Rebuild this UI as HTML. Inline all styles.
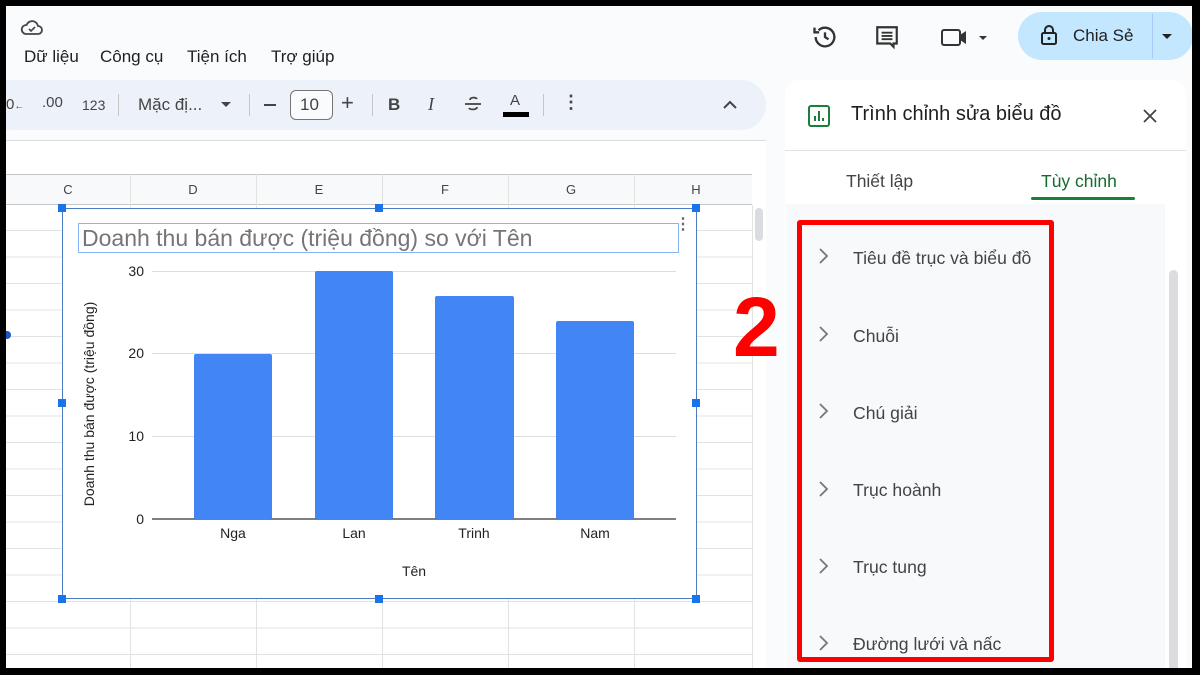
<!DOCTYPE html>
<html><head><meta charset="utf-8"><style>
*{margin:0;padding:0;box-sizing:border-box}
body{width:1200px;height:675px;background:#000;position:relative;overflow:hidden;font-family:"Liberation Sans",Arial,sans-serif;color:#444746}
#f{position:absolute;left:6px;top:6px;width:1186px;height:662px;background:#f9fbfd;overflow:hidden}
.a{position:absolute}
.t{position:absolute;white-space:nowrap}
.m{position:absolute;top:41px;font-size:17px;color:#1f1f1f;white-space:nowrap}
.p{position:absolute;white-space:nowrap;left:847px;font-size:17.6px;color:#444}
</style></head><body>
<div id="f">
<svg class="a" style="left:14px;top:12px" width="24" height="20" viewBox="0 0 24 20"><path d="M6 16h12a4 4 0 0 0 0-8 6 6 0 0 0-11.5-1A4.5 4.5 0 0 0 6 16z" fill="none" stroke="#444" stroke-width="1.8"/><path d="M9 11l2 2 4-4" fill="none" stroke="#444" stroke-width="1.6"/></svg>
<div class="m" style="left:18px">Dữ liệu</div>
<div class="m" style="left:94px">Công cụ</div>
<div class="m" style="left:181px">Tiện ích</div>
<div class="m" style="left:265px">Trợ giúp</div>
<div class="a" style="left:-20px;top:74px;width:780px;height:50px;background:#edf2fa;border-radius:25px"></div>
<div class="t" style="left:0;top:90px;font-size:15px;color:#444">0<span style="font-size:10px">←</span></div>
<div class="t" style="left:36px;top:88px;font-size:15px;color:#444">.00</div>
<div class="t" style="left:76px;top:91px;font-size:14px;color:#444">123</div>
<div class="a" style="left:112px;top:88px;width:1px;height:22px;background:#c4c7c5"></div>
<div class="t" style="left:132px;top:89px;font-size:17px;color:#444">Mặc đị...</div>
<div class="a" style="left:215px;top:96px;border:5px solid transparent;border-top:5px solid #444"></div>
<div class="a" style="left:243px;top:88px;width:1px;height:22px;background:#c4c7c5"></div>
<div class="a" style="left:258px;top:98px;width:12px;height:2px;background:#444"></div>
<div class="a" style="left:284px;top:84px;width:43px;height:30px;border:1px solid #747775;border-radius:6px;background:#f9fbfd"></div>
<div class="t" style="left:294px;top:89px;font-size:17px;color:#444">10</div>
<div class="t" style="left:335px;top:84px;font-size:22px;color:#444">+</div>
<div class="a" style="left:366px;top:88px;width:1px;height:22px;background:#c4c7c5"></div>
<div class="t" style="left:382px;top:89px;font-size:17px;font-weight:bold;color:#444">B</div>
<div class="t" style="left:422px;top:88px;font-size:18px;font-style:italic;font-family:'Liberation Serif',serif;color:#444">I</div>
<svg class="a" style="left:458px;top:88px" width="18" height="20"><path d="M13 5c-1-2-7-2-7 1M5 14c1 2 8 2 8-1" fill="none" stroke="#444" stroke-width="1.8"/><path d="M1 10h16" stroke="#444" stroke-width="1.8"/></svg>
<div class="t" style="left:504px;top:86px;font-size:15px;color:#444">A</div>
<div class="a" style="left:497px;top:106px;width:26px;height:5px;background:#000"></div>
<div class="a" style="left:537px;top:88px;width:1px;height:22px;background:#c4c7c5"></div>
<div class="t" style="left:556px;top:86px;font-size:18px;font-weight:bold;color:#444">⋮</div>
<svg class="a" style="left:716px;top:93px" width="16" height="12"><path d="M2 9l6-6 6 6" fill="none" stroke="#444" stroke-width="2"/></svg>
<div class="a" style="left:0;top:134px;width:760px;height:528px;background:#fff;border-top:1px solid #dadce0"></div>
<div class="a" style="left:0;top:168px;width:746px;height:31px;background:#f8f9fa;border-top:1px solid #c4c7c5;border-bottom:1px solid #c4c7c5"></div>
<svg class="a" style="left:0;top:168px" width="746" height="494">
<g stroke="#e1e3e1" stroke-width="1">
<line x1="124.5" y1="0" x2="124.5" y2="494"/><line x1="250.5" y1="0" x2="250.5" y2="494"/><line x1="376.5" y1="0" x2="376.5" y2="494"/><line x1="502.5" y1="0" x2="502.5" y2="494"/><line x1="628.5" y1="0" x2="628.5" y2="494"/>
</g>
<g stroke="#e1e3e1"><path d="M0 56.5H746M0 83H746M0 109.5H746M0 136H746M0 162.5H746M0 189H746M0 215.5H746M0 242H746M0 268.5H746M0 295H746M0 321.5H746M0 348H746M0 374.5H746M0 401H746M0 427.5H746M0 454H746M0 480.5H746"/></g>
<g font-size="13" fill="#444" text-anchor="middle" font-family="Liberation Sans"><text x="62" y="20">C</text><text x="187" y="20">D</text><text x="313" y="20">E</text><text x="439" y="20">F</text><text x="565" y="20">G</text><text x="690" y="20">H</text></g>
</svg>
<div class="a" style="left:746px;top:199px;width:14px;height:463px;background:#fff;border-left:1px solid #e1e3e1"></div>
<div class="a" style="left:749px;top:202px;width:8px;height:33px;background:#dadce0;border-radius:4px"></div>
<div class="a" style="left:-3px;top:325px;width:8px;height:8px;border-radius:50%;background:#1a56c0"></div>
<div class="a" style="left:56px;top:202px;width:635px;height:391px;background:#fff;border:1.5px solid #4a7cc4"></div>
<div class="a" style="left:52px;top:198px;width:8px;height:8px;background:#1a73e8"></div>
<div class="a" style="left:369px;top:198px;width:8px;height:8px;background:#1a73e8"></div>
<div class="a" style="left:686px;top:198px;width:8px;height:8px;background:#1a73e8"></div>
<div class="a" style="left:52px;top:393px;width:8px;height:8px;background:#1a73e8"></div>
<div class="a" style="left:686px;top:393px;width:8px;height:8px;background:#1a73e8"></div>
<div class="a" style="left:52px;top:589px;width:8px;height:8px;background:#1a73e8"></div>
<div class="a" style="left:369px;top:589px;width:8px;height:8px;background:#1a73e8"></div>
<div class="a" style="left:686px;top:589px;width:8px;height:8px;background:#1a73e8"></div>
<div class="a" style="left:72px;top:217px;width:601px;height:30px;border:1px solid #8ab4f8"></div>
<div class="t" style="left:76px;top:219px;font-size:23px;color:#757575">Doanh thu bán được (triệu đồng) so với Tên</div>
<div class="t" style="left:669px;top:208px;font-size:16px;font-weight:bold;color:#666">⋮</div>
<svg class="a" style="left:0;top:0" width="700" height="600" font-family="Liberation Sans">
<g stroke="#ddd"><line x1="146" y1="265.5" x2="670" y2="265.5"/><line x1="146" y1="347.5" x2="670" y2="347.5"/><line x1="146" y1="430.5" x2="670" y2="430.5"/></g>
<line x1="146" y1="513" x2="670" y2="513" stroke="#333" stroke-width="1.3"/>
<g font-size="14" fill="#222" text-anchor="end"><text x="138" y="270">30</text><text x="138" y="352">20</text><text x="138" y="435">10</text><text x="138" y="518">0</text></g>
<g fill="#4285f4"><rect x="188" y="348" width="78" height="165" rx="2"/><rect x="309" y="265" width="78" height="248" rx="2"/><rect x="429" y="290" width="79" height="223" rx="2"/><rect x="550" y="315" width="78" height="198" rx="2"/></g>
<g font-size="14" fill="#222" text-anchor="middle"><text x="227" y="532">Nga</text><text x="348" y="532">Lan</text><text x="468" y="532">Trinh</text><text x="589" y="532">Nam</text><text x="408" y="570">Tên</text></g>
<text transform="translate(88 398) rotate(-90)" font-size="14" fill="#222" text-anchor="middle">Doanh thu bán được (triệu đồng)</text>
</svg>
<svg class="a" style="left:805px;top:17px" width="28" height="28" viewBox="0 0 24 24"><path d="M4 12a8 8 0 1 0 2.5-5.8" fill="none" stroke="#333" stroke-width="2"/><path d="M3 4v4h4" fill="none" stroke="#333" stroke-width="2"/><path d="M12 8v4l3 2" fill="none" stroke="#333" stroke-width="2"/></svg>
<svg class="a" style="left:868px;top:18px" width="26" height="26" viewBox="0 0 24 24"><path d="M3 3h18v15h-3v3l-3-3H3z" fill="none" stroke="#333" stroke-width="2"/><path d="M7 8h10M7 11h10M7 14h10" stroke="#333" stroke-width="1.8"/></svg>
<svg class="a" style="left:934px;top:20px" width="50" height="24" viewBox="0 0 50 24"><rect x="2" y="4" width="18" height="15" rx="2" fill="none" stroke="#333" stroke-width="2"/><path d="M20 9l6-4v13l-6-4z" fill="#333"/><path d="M39 10h8l-4 4z" fill="#333"/></svg>
<div class="a" style="left:1012px;top:6px;width:175px;height:48px;background:#c2e7ff;border-radius:24px"></div>
<div class="a" style="left:1146px;top:8px;width:1px;height:44px;background:#a8c7fa"></div>
<svg class="a" style="left:1034px;top:18px" width="18" height="22" viewBox="0 0 18 22"><rect x="2" y="9" width="14" height="11" rx="1.5" fill="none" stroke="#222" stroke-width="2"/><path d="M5 9V6a4 4 0 0 1 8 0v3" fill="none" stroke="#222" stroke-width="2"/><circle cx="9" cy="14.5" r="1.5" fill="#222"/></svg>
<div class="t" style="left:1067px;top:20px;font-size:17px;color:#222">Chia Sẻ</div>
<svg class="a" style="left:1155px;top:27px" width="12" height="7"><path d="M1 1h10l-5 5z" fill="#222"/></svg>
<div class="a" style="left:779px;top:74px;width:401px;height:600px;background:#fff;border-radius:14px 14px 0 0"></div>
<div class="a" style="left:779px;top:144px;width:401px;height:1px;background:#e1e3e1"></div>
<svg class="a" style="left:801px;top:98px" width="24" height="24" viewBox="0 0 24 24"><rect x="2" y="2" width="20" height="20" rx="2" fill="none" stroke="#188038" stroke-width="2"/><path d="M8 17v-5M12 17V7M16 17v-3" stroke="#188038" stroke-width="2"/></svg>
<div class="t" style="left:845px;top:97px;font-size:20px;color:#1f1f1f">Trình chỉnh sửa biểu đồ</div>
<svg class="a" style="left:1137px;top:103px" width="14" height="14"><path d="M1 1l12 12M13 1L1 13" stroke="#444" stroke-width="1.8"/></svg>
<div class="t" style="left:840px;top:165px;font-size:17.5px;color:#444">Thiết lập</div>
<div class="t" style="left:1035px;top:165px;font-size:17.5px;color:#146c2e">Tùy chỉnh</div>
<div class="a" style="left:1025px;top:191px;width:104px;height:3px;background:#188038;border-radius:2px"></div>
<div class="a" style="left:780px;top:198px;width:379px;height:470px;background:#f8f9fa"></div>
<div class="a" style="left:1161px;top:198px;width:19px;height:470px;background:#fff"></div>
<div class="a" style="left:1163px;top:264px;width:9px;height:410px;background:#dadce0;border-radius:5px"></div>
<div class="t" style="left:727px;top:273px;font-size:84px;font-weight:bold;color:#f00">2</div>
<div class="a" style="left:791px;top:214px;width:257px;height:442px;border:5px solid #f00;border-radius:3px"></div>
<svg class="a" style="left:0;top:0" width="1186" height="662"><g fill="none" stroke="#777" stroke-width="1.8"><path d="M814 243l7 7-7 7M814 321l7 7-7 7M814 398l7 7-7 7M814 476l7 7-7 7M814 553l7 7-7 7M814 630l7 7-7 7"/></g></svg>
<div class="p" style="top:242px">Tiêu đề trục và biểu đồ</div>
<div class="p" style="top:320px">Chuỗi</div>
<div class="p" style="top:397px">Chú giải</div>
<div class="p" style="top:474px">Trục hoành</div>
<div class="p" style="top:551px">Trục tung</div>
<div class="p" style="top:628px">Đường lưới và nấc</div>
</div>
</body></html>
